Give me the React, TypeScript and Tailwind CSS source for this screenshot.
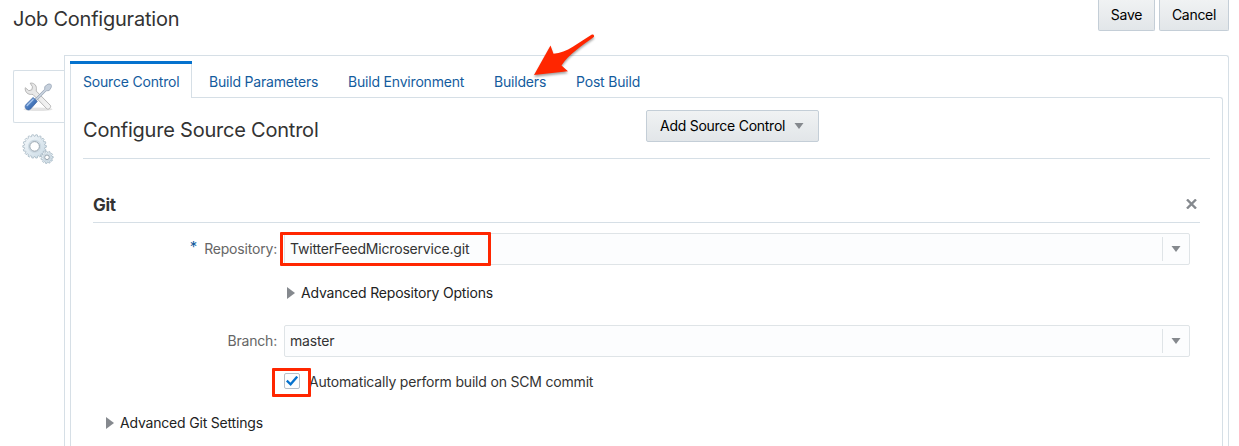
import React from "react";

const tabs = [
  { label: "Build Parameters", cls: "ml-[17px] w-[110px]" },
  { label: "Build Environment", cls: "ml-[29px] w-[117px]" },
  { label: "Builders", cls: "ml-[29px] w-[53px]" },
  { label: "Post Build", cls: "ml-[29px] w-[66px]" },
];

function ToolsIcon() {
  return (
    <svg width="32" height="32" viewBox="0 0 32 32">
      <defs>
        <linearGradient id="handle" x1="0" y1="0" x2="1" y2="1">
          <stop offset="0" stopColor="#8fb2e2" />
          <stop offset="0.5" stopColor="#4a7cc0" />
          <stop offset="1" stopColor="#2b5596" />
        </linearGradient>
        <linearGradient id="steel" x1="0" y1="0" x2="1" y2="1">
          <stop offset="0" stopColor="#e2e2e2" />
          <stop offset="1" stopColor="#f4f4f4" />
        </linearGradient>
      </defs>
      <ellipse cx="16" cy="28.3" rx="14.5" ry="1.800" fill="#dcdcdc" opacity="0.8" />
      <path
        d="M8.200 2.200c3-.7 6.400 1.600 6.200 5.500-.1 1.100-.3 1.700-.1 2.400L28.300 24.300c1.500 1.700-1.700 5-3.500 3.500L11 13.500c-.8-.3-1.700 0-2.700-.1C4.800 13 2.700 10 3.300 6.700l3.500 3 3-.9.700-3z"
        fill="url(#steel)"
        stroke="#b0b0b0"
        strokeWidth="0.9"
        strokeLinejoin="round"
      />
      <path
        d="M28.300 3c1.300.9 1.400 2.500.6 4l-1.700 2.500-2.900.3L14 20.200l-1.600-1.600L22.700 8.200l.1-2.700L26 3.100z"
        fill="#c6d0dc"
        stroke="#98a5b5"
        strokeWidth="0.8"
        strokeLinejoin="round"
      />
      <path
        d="M11.200 16.400l4 4.100-6.400 7.300c-1.600 1.700-3.600 1.200-4.800 0-1.100-1.200-1.300-3 .2-4.500z"
        fill="url(#handle)"
        stroke="#3a62a0"
        strokeWidth="0.7"
      />
      <path d="M11.200 18.500l-6 6" stroke="#a9c6ec" strokeWidth="1.200" strokeLinecap="round" />
    </svg>
  );
}

function Gear({ cx, cy, r, teeth, hole, tooth }: { cx: number; cy: number; r: number; teeth: number; hole: number; tooth: number }) {
  const points: string[] = [];
  for (let i = 0; i < teeth; i++) {
    const steps: [number, number][] = [[-0.36, r], [-0.2, r + tooth], [0.2, r + tooth], [0.36, r]];
    steps.forEach(([offset, radius]) => {
      const a = ((i + offset) / teeth) * Math.PI * 2;
      points.push(`${(cx + radius * Math.cos(a)).toFixed(2)},${(cy + radius * Math.sin(a)).toFixed(2)}`);
    });
  }
  return (
    <g>
      <polygon points={points.join(" ")} fill="url(#gear)" stroke="#9fb1be" strokeWidth="0.7" strokeLinejoin="round" />
      <circle cx={cx} cy={cy} r={hole + 1.2} fill="none" stroke="#ccd9e2" strokeWidth="1.200" />
      <circle cx={cx} cy={cy} r={hole} fill="#fff" stroke="#8d9ba6" strokeWidth="0.9" />
    </g>
  );
}

function GearsIcon() {
  return (
    <svg width="32" height="32" viewBox="0 0 32 32">
      <defs>
        <linearGradient id="gear" x1="0" y1="0" x2="1" y2="1">
          <stop offset="0" stopColor="#f7fafc" />
          <stop offset="1" stopColor="#c8d9e4" />
        </linearGradient>
      </defs>
      <Gear cx={12.6} cy={12.4} r={10.2} teeth={18} hole={4.8} tooth={1.6} />
      <Gear cx={25} cy={23.3} r={4.9} teeth={11} hole={2.3} tooth={1.3} />
    </svg>
  );
}

function Down() {
  return (
    <svg width="10" height="6" viewBox="0 0 10 6" className="shrink-0">
      <path d="M0.500 0h9L5 6z" fill="#85898e" />
    </svg>
  );
}

function Disclosure({ label }: { label: string }) {
  return (
    <div className="flex h-[20px] items-center">
      <svg width="8" height="12" viewBox="0 0 8 12" className="shrink-0">
        <path d="M0 0l8 6-8 6z" fill="#85898e" />
      </svg>
      <span className="ml-[6px] text-[#222]">{label}</span>
    </div>
  );
}

function Combo({ value }: { value: string }) {
  return (
    <div className="flex h-[32px] w-[906px] items-center rounded-[2px] border border-[#dfe4e7] bg-[#fcfdfe]">
      <span className="flex-1 pl-[5px] text-[#333]">{value}</span>
      <div className="flex h-[24px] w-[27px] items-center justify-center border-l border-[#dfe4e7]">
        <Down />
      </div>
    </div>
  );
}

export default function App() {
  return (
    <div className="relative h-[446px] w-[1239px] overflow-hidden bg-white font-['Inter',sans-serif] text-[14px] leading-[20px] tracking-[-0.19px] whitespace-nowrap text-black">
      <header className="flex h-[55px] items-start pr-[10px] pl-[13px]">
        <h1 className="mt-[5px] text-[20px] leading-[28px] tracking-[-0.22px] text-[#333]">Job Configuration</h1>
        <div className="ml-auto flex gap-[4px]">
          <button className="flex h-[31px] w-[57px] items-center justify-center rounded-b-[2px] border border-t-0 border-[#c4ced7] bg-linear-to-b from-[#f0f2f3] to-[#e2e6e9]">Save</button>
          <button className="flex h-[31px] w-[70px] items-center justify-center rounded-b-[2px] border border-t-0 border-[#c4ced7] bg-linear-to-b from-[#f0f2f3] to-[#e2e6e9] tracking-[-0.3px]">Cancel</button>
        </div>
      </header>

      <div className="flex h-[391px] pl-[13px]">
        <aside className="w-[51px] pt-[15px]">
          <div className="flex h-[53px] items-center rounded-l-[2px] border border-r-0 border-[#d6dfe6] pt-px pl-[8px]">
            <ToolsIcon />
          </div>
          <div className="mt-[11px] pl-[9px]">
            <GearsIcon />
          </div>
        </aside>

        <main className="flex w-[1165px] flex-col rounded-tr-[3px] border border-b-0 border-[#d6dfe6] px-[5px] pt-[5px]">
          <nav className="flex h-[36px] shrink-0 text-[#145c9e]">
            <div className="relative z-10 flex h-[37px] w-[122px] flex-col border-x border-[#d6dfe6] bg-white">
              <div className="-mx-px h-[3px] shrink-0 bg-[#0572ce]" />
              <span className="mt-[8px] ml-[12px]">Source Control</span>
            </div>
            {tabs.map((t) => (
              <span key={t.label} className={"mt-[11px] " + t.cls}>{t.label}</span>
            ))}
          </nav>

          <section className="flex-1 rounded-tr-[3px] border border-b-0 border-[#d6dfe6] px-[12px]">
            <div className="flex h-[61px] items-start border-b border-[#d6dfe6]">
              <h2 className="mt-[18px] w-[563px] text-[20px] leading-[28px] tracking-[-0.22px] text-[#333]">Configure Source Control</h2>
              <button className="mt-[12px] flex h-[32px] w-[173px] items-center rounded-[2px] border border-[#c4ced7] bg-linear-to-b from-[#f0f2f3] to-[#e2e6e9] pl-[13px]">
                <span className="w-[134px] text-left tracking-[-0.26px]">Add Source Control</span>
                <Down />
              </button>
            </div>

            <div className="px-[10px]">
              <div className="flex h-[64px] items-start justify-between border-b border-[#d6dfe6]">
                <h3 className="mt-[34px] text-[17px] leading-[24px] font-bold tracking-[-0.3px] text-[#333]">Git</h3>
                <svg width="11" height="10" viewBox="0 0 11 10" className="mt-[40px] mr-[3px]">
                  <path d="M1 0.500l9 9M10 0.500L1 9.500" stroke="#85898e" strokeWidth="2.400" />
                </svg>
              </div>

              <div className="mt-[10px] flex items-center">
                <div className="flex w-[191px] items-center justify-end pr-[7px] text-[#666]">
                  <span className="mr-[7px] -mt-[4px] text-[15px] text-[#145c9e]">*</span>
                  <span>Repository:</span>
                </div>
                <Combo value="TwitterFeedMicroservice.git" />
              </div>
              <div className="mt-[18px] pl-[194px]">
                <Disclosure label="Advanced Repository Options" />
              </div>
              <div className="mt-[22px] flex items-center">
                <div className="w-[191px] pr-[7px] text-right text-[#666]">Branch:</div>
                <Combo value="master" />
              </div>
              <div className="mt-[15px] flex h-[20px] items-center pl-[191px]">
                <div className="-mt-[2px] flex h-[16px] w-[16px] items-center justify-center rounded-[2px] border border-[#b6bfc9] bg-[#fcfdfe]">
                  <svg width="12" height="10" viewBox="0 0 12 10">
                    <path d="M0.800 4.700L4.600 8.300 11.200 0.600" fill="none" stroke="#0572ce" strokeWidth="2.300" />
                  </svg>
                </div>
                <span className="ml-[9px] text-[#333]">Automatically perform build on SCM commit</span>
              </div>
              <div className="mt-[21px] pl-[13px]">
                <Disclosure label="Advanced Git Settings" />
              </div>
            </div>
          </section>
        </main>
      </div>

      <div className="absolute top-[232px] left-[280px] z-20 h-[34px] w-[211px] rounded-[1px] border-[3px] border-[#ff2600]" />
      <div className="absolute top-[368px] left-[272px] z-20 h-[29px] w-[39px] rounded-[1px] border-[3px] border-[#ff2600]" />
      <svg width="74" height="56" viewBox="0 0 74 56" className="absolute top-[27px] left-[527px] z-20 drop-shadow-[0_2px_1px_rgba(0,0,0,0.35)]">
        <path d="M7 48L23.500 18.500l3 8.300C40 26 52 15 64.500 7.700c2-1 3.500 1 2 2.500C56 18 42 27 34.500 38.500l6.500 5.700z" fill="#ff2600" />
      </svg>
    </div>
  );
}
